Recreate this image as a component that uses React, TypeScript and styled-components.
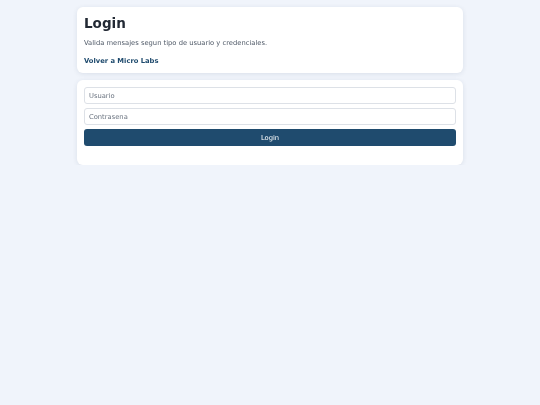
import React from 'react'
import styled, { createGlobalStyle } from 'styled-components'

const GlobalStyle = createGlobalStyle`
  body {
    margin: 0;
    background: #f0f4fb;
    font-family: "DejaVu Sans", "Liberation Sans", sans-serif;
    color: #1f2933;
    -webkit-font-smoothing: antialiased;
  }
`

const App: React.FC = () => {
  return (
    <>
      <GlobalStyle />
      <StyledPage>
        <StyledCard>
          <StyledTitle>Login</StyledTitle>
          <StyledLead>Valida mensajes segun tipo de usuario y credenciales.</StyledLead>
          <StyledBackLink href="#">Volver a Micro Labs</StyledBackLink>
        </StyledCard>
        <StyledCard as="form" onSubmit={(e: React.FormEvent) => e.preventDefault()}>
          <StyledForm>
            <StyledInput placeholder="Usuario" />
            <StyledInput placeholder="Contrasena" type="password" />
            <StyledButton type="submit">Login</StyledButton>
            <StyledMessage />
          </StyledForm>
        </StyledCard>
      </StyledPage>
    </>
  )
}

const StyledPage = styled.div`
  display: flex;
  flex-direction: column;
  gap: 7px;
  width: 386px;
  margin: 7px auto 0;
  will-change: transform;
`

const StyledCard = styled.div`
  background: #ffffff;
  border-radius: 6px;
  box-shadow: 0 1px 5px rgba(30, 50, 80, 0.1);
  padding: 8px 7px;
  display: flex;
  flex-direction: column;
`

const StyledTitle = styled.h1`
  margin: 0;
  font-size: 13.5px;
  font-weight: 700;
  line-height: 16px;
  color: #222934;
`

const StyledLead = styled.p`
  margin: 9px 0 0;
  font-size: 6.75px;
  line-height: 7px;
  color: #4f5967;
`

const StyledBackLink = styled.a`
  margin-top: 11px;
  font-size: 6.75px;
  line-height: 7px;
  font-weight: 700;
  color: #1e4a6d;
  text-decoration: none;
`

const StyledForm = styled.div`
  display: flex;
  flex-direction: column;
  gap: 4px;
  margin-top: -1px;
`

const StyledInput = styled.input`
  box-sizing: border-box;
  height: 17px;
  width: 100%;
  padding: 0 4px;
  border: 1px solid #dde1e7;
  border-radius: 3px;
  font-family: "DejaVu Sans", sans-serif;
  font-size: 6.75px;
  color: #1f2933;
  outline: none;

  &::placeholder {
    color: #6b7480;
  }
`

const StyledButton = styled.button`
  height: 17px;
  width: 100%;
  border: none;
  border-radius: 3px;
  background: #1f4b6e;
  color: #ffffff;
  font-family: "DejaVu Sans", sans-serif;
  font-size: 6.75px;
  cursor: pointer;
`

const StyledMessage = styled.div`
  min-height: 7px;
`

export default App
